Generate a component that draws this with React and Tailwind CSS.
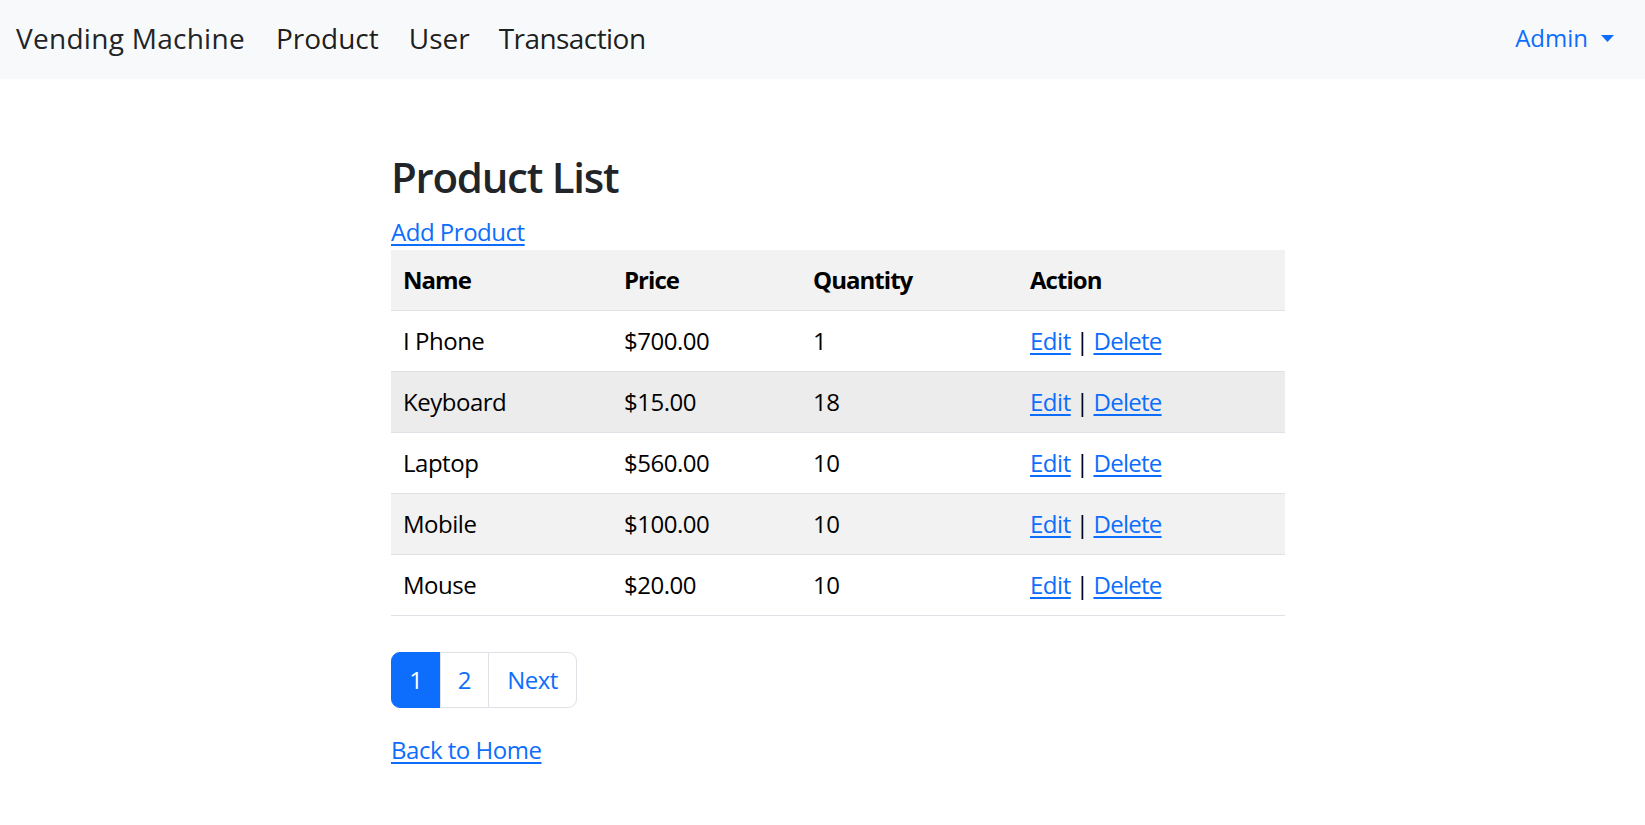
import React from "react";

const rows = [
  { name: "I Phone", price: "$700.00", qty: "1", bg: "bg-white" },
  { name: "Keyboard", price: "$15.00", qty: "18", bg: "bg-[#ececec]" },
  { name: "Laptop", price: "$560.00", qty: "10", bg: "bg-white" },
  { name: "Mobile", price: "$100.00", qty: "10", bg: "bg-[#f2f2f2]" },
  { name: "Mouse", price: "$20.00", qty: "10", bg: "bg-white" },
];

export default function App() {
  return (
    <div className="min-h-[825px] bg-white text-[#212529] font-['Open_Sans',sans-serif]">
      <nav className="h-[79px] bg-[#f8f9fa] flex items-center justify-between pl-[16px] pr-[31px] pb-[4px]">
        <div className="flex items-center text-[28px] leading-[40px]">
          <a className="text-[#212529] tracking-[0.01em] mr-[31px]">Vending Machine</a>
          <a className="text-black/90 mr-[30px]">Product</a>
          <a className="text-black/90 mr-[29px]">User</a>
          <a className="text-black/90 tracking-[-0.02em]">Transaction</a>
        </div>
        <div className="flex items-center gap-[13px] text-[24px] leading-[36px] text-[#0d6efd]">
          <span>Admin</span>
          <svg width="13" height="7" viewBox="0 0 13 7" className="mt-[2px]">
            <path d="M0 0H13L6.5 7Z" fill="#0d6efd" />
          </svg>
        </div>
      </nav>

      <main className="pl-[391px] pt-[71px]">
        <h2 className="text-[42px] leading-[53px] font-semibold tracking-[-0.03em] text-[#212529] mb-[11px]">
          Product List
        </h2>
        <div className="text-[24px] leading-[36px] tracking-[-0.02em]">
          <a className="text-[#0d6efd] underline underline-offset-[3px]">Add Product</a>
        </div>

        <table className="w-[894px] table-fixed border-collapse text-[24px] leading-[36px] tracking-[-0.02em]">
          <colgroup>
            <col className="w-[221px]" />
            <col className="w-[189px]" />
            <col className="w-[217px]" />
            <col className="w-[267px]" />
          </colgroup>
          <thead>
            <tr className="bg-[#f2f2f2] border-b border-[#dee2e6]">
              <th className="text-left font-bold tracking-[-0.04em] text-black px-[12px] py-[12px]">Name</th>
              <th className="text-left font-bold tracking-[-0.04em] text-black px-[12px] py-[12px]">Price</th>
              <th className="text-left font-bold tracking-[-0.04em] text-black px-[12px] py-[12px]">Quantity</th>
              <th className="text-left font-bold tracking-[-0.04em] text-black px-[12px] py-[12px]">Action</th>
            </tr>
          </thead>
          <tbody>
            {rows.map((r) => (
              <tr key={r.name} className={`${r.bg} border-b border-[#dee2e6]`}>
                <td className="px-[12px] py-[12px] text-black">{r.name}</td>
                <td className="px-[12px] py-[12px] text-black">{r.price}</td>
                <td className="px-[12px] py-[12px] text-black">{r.qty}</td>
                <td className="px-[12px] py-[12px] text-black">
                  <a className="text-[#0d6efd] underline underline-offset-[3px]">Edit</a>
                  <span className="mx-[5px]">|</span>
                  <a className="text-[#0d6efd] underline underline-offset-[3px] tracking-[-0.03em]">Delete</a>
                </td>
              </tr>
            ))}
          </tbody>
        </table>

        <div className="mt-[36px] flex text-[24px] leading-[36px]">
          <span className="w-[50px] h-[56px] flex items-center justify-center bg-[#0d6efd] border border-[#0d6efd] text-white rounded-l-[9px]">
            1
          </span>
          <span className="w-[49px] h-[56px] -ml-px flex items-center justify-center border border-[#dee2e6] text-[#0d6efd]">
            2
          </span>
          <span className="w-[89px] h-[56px] -ml-px flex items-center justify-center border border-[#dee2e6] text-[#0d6efd] tracking-[-0.02em] rounded-r-[9px]">
            Next
          </span>
        </div>

        <div className="mt-[24px] text-[24px] leading-[36px] tracking-[-0.02em]">
          <a className="text-[#0d6efd] underline underline-offset-[3px]">Back to Home</a>
        </div>
      </main>
    </div>
  );
}
